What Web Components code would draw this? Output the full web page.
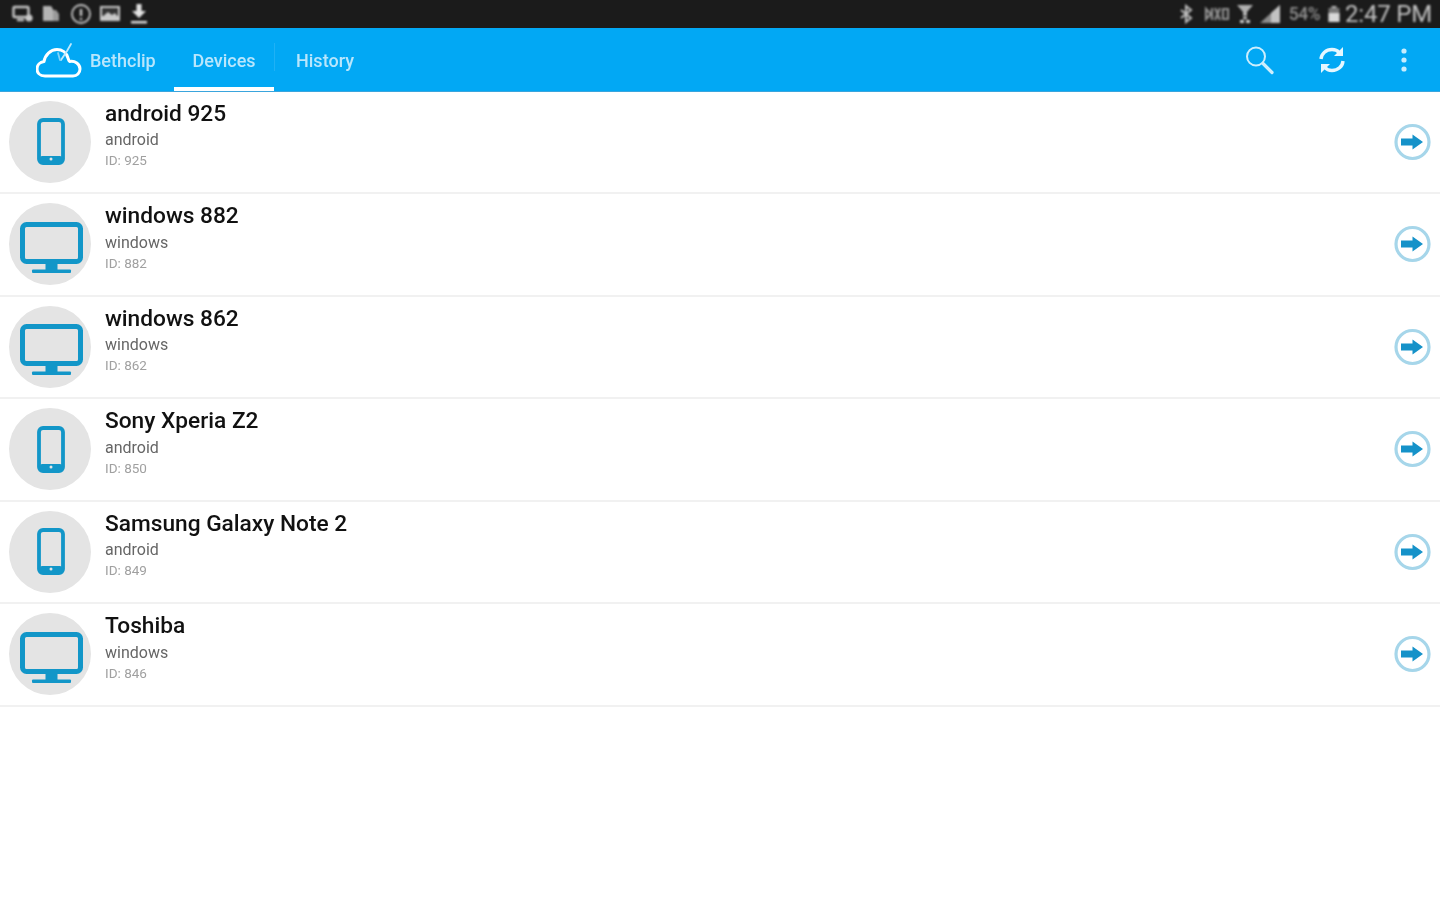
<!DOCTYPE html>
<html>
<head>
<meta charset="utf-8">
<title>Bethclip</title>
<style>
html, body { margin: 0; height: 100%; background: #fff; }
body { display: flex; flex-direction: column; height: 900px; overflow: hidden; font-family: "Roboto", "Liberation Sans", sans-serif; }
</style>
</head>
<body>
<status-bar></status-bar>
<app-bar></app-bar>
<device-list>
  <device-row name="android 925" kind="android" device-id="925"></device-row>
  <device-row name="windows 882" kind="windows" device-id="882"></device-row>
  <device-row name="windows 862" kind="windows" device-id="862"></device-row>
  <device-row name="Sony Xperia Z2" kind="android" device-id="850"></device-row>
  <device-row name="Samsung Galaxy Note 2" kind="android" device-id="849"></device-row>
  <device-row name="Toshiba" kind="windows" device-id="846"></device-row>
</device-list>

<script>
customElements.define('status-bar',
    class StatusBar extends HTMLElement {
        constructor() {
            super();
            const shadow = this.attachShadow({ mode: 'open' });
            shadow.innerHTML = `
            <style>
                :host {
                    display: block;
                    flex: 0 0 28px;
                    height: 28px;
                    background: #1b1b1b;
                    color: #c4c4c4;
                }
                .bar {
                    display: flex;
                    height: 100%;
                    align-items: center;
                    justify-content: space-between;
                    padding: 0 8px 0 12px;
                    box-sizing: border-box;
                    filter: blur(0.8px);
                }
                .left, .right { display: flex; align-items: center; }
                .left { gap: 8px; }
                svg { display: block; }
                .pct { font-size: 17.5px; font-weight: 500; letter-spacing: -0.5px; color: #8f8f8f; margin: 0 8px; }
                .time { font-size: 24px; color: #c2c2c2; margin-left: 5px; letter-spacing: -0.2px; }
            </style>
            <div class="bar">
            <div class="left">
                <svg width="23" height="20" viewBox="0 0 23 20" fill="none" stroke="#c8c8c8" stroke-width="2.4">
                    <rect x="1.5" y="3" width="15" height="10" rx="1"/>
                    <circle cx="17" cy="14" r="3.6" fill="#c8c8c8" stroke="none"/>
                    <path d="M5 16h7"/>
                </svg>
                <svg width="18" height="20" viewBox="0 0 18 20" style="margin-left:-1px">
                    <path d="M1 2h8l2 3v12H1z" fill="#b4b4b4"/>
                    <path d="M11 6h3l3 4v7h-6z" fill="#9a9a9a"/>
                </svg>
                <svg width="22" height="22" viewBox="0 0 22 22" fill="none" stroke="#c8c8c8" stroke-width="1.8" style="margin-left:2px">
                    <circle cx="11" cy="11" r="9"/>
                    <path d="M11 6v7M11 15v2" stroke-width="2.4"/>
                </svg>
                <svg width="22" height="20" viewBox="0 0 22 20" style="margin-left:-1px">
                    <rect x="1" y="2" width="20" height="15" fill="#c8c8c8"/>
                    <rect x="3" y="4" width="16" height="8" fill="#333"/>
                    <path d="M3 13l6-5 4 3 3-2 3 4z" fill="#c8c8c8"/>
                </svg>
                <svg width="18" height="22" viewBox="0 0 18 22" fill="#e4e4e4" style="margin-left:1px">
                    <path d="M6.5 1h5v7h4.500L9 15 2 8h4.500z"/>
                    <rect x="1" y="18" width="16" height="2.400"/>
                </svg>
            </div>
            <div class="right">
                <svg width="14" height="20" viewBox="0 0 14 20" fill="none" stroke="#bdbdbd" stroke-width="2">
                    <path d="M2 6l10 8-5 4V2l5 4-10 8"/>
                </svg>
                <svg width="26" height="18" viewBox="0 0 26 18" fill="none" stroke="#8f8f8f" stroke-width="2.200" style="margin-left:11px">
                    <path d="M2 4l5 5-5 5zM8 3v12M11 3l5 12M16 3l-5 12M19 4h5v10h-5z"/>
                </svg>
                <svg width="18" height="22" viewBox="0 0 18 22" style="margin-left:6px">
                    <path d="M1 2h16l-6 7v4H7V9z" fill="#b0b0b0"/>
                    <path d="M7 14h4v2H7zM4 17h4v3H4zM10 17h4v3h-4z" fill="#d0d0d0"/>
                </svg>
                <svg width="22" height="20" viewBox="0 0 22 20" style="margin-left:5px">
                    <path d="M1 19L21 1v18z" fill="#8c8c8c"/>
                    <path d="M12 19V9l9-8v18z" fill="#c2c2c2"/>
                </svg>
                <span class="pct">54%</span>
                <svg width="12" height="18" viewBox="0 0 12 18">
                    <rect x="3.500" y="1" width="5" height="2" fill="#b5b5b5"/>
                    <rect x="0.500" y="3" width="11" height="14" fill="#777"/>
                    <rect x="0.500" y="8" width="11" height="9" fill="#d8d8d8"/>
                </svg>
                <span class="time">2:47 PM</span>
            </div>
            </div>
            `;
        }
    }
);

customElements.define('app-tab',
    class AppTab extends HTMLElement {
        constructor() {
            super();
            const shadow = this.attachShadow({ mode: 'open' });
            shadow.innerHTML = `
            <style>
                :host {
                    display: flex;
                    align-items: center;
                    justify-content: center;
                    box-sizing: border-box;
                    height: 100%;
                    width: 100px;
                    border-bottom: 4px solid transparent;
                    padding-top: 5px;
                    font-size: 18px;
                    font-weight: 500;
                    color: #b9e6fc;
                }
                :host([active]) { border-bottom-color: #fff; }
            </style>
            <slot></slot>
            `;
        }
    }
);

customElements.define('app-bar',
    class AppBar extends HTMLElement {
        constructor() {
            super();
            const shadow = this.attachShadow({ mode: 'open' });
            shadow.innerHTML = `
            <style>
                :host {
                    display: block;
                    flex: 0 0 64px;
                    height: 64px;
                    box-sizing: border-box;
                    background: #02a8f4;
                    border-bottom: 1px solid #3aa5dd;
                }
                .bar { display: flex; height: 100%; align-items: stretch; filter: blur(0.7px); }
                .brand { display: flex; align-items: center; gap: 8px; width: 174px; box-sizing: border-box; padding-left: 36px; }
                .brand span { font-size: 18px; font-weight: 500; color: #b9e6fc; margin-top: 1px; }
                .tabs { display: flex; align-items: stretch; }
                .sep { width: 1px; margin: 15px 0 20px; background: #1fb1f5; }
                .actions { margin-left: auto; display: flex; align-items: center; gap: 44px; padding: 0 33px 0 0; }
                svg { display: block; }
            </style>
            <div class="bar">
            <div class="brand">
                <svg width="46" height="40" viewBox="0 0 46 40" fill="none" stroke="#fff" stroke-width="3" stroke-linejoin="round" stroke-linecap="round">
                    <path d="M9 36C3.500 36 1 32.500 1 29c0-4 3-7 7-7.500C9 15 14.500 9.500 21 9.500c5 0 9.500 3 11 8.500 1 3 1 3.500 1.500 3.500 5.500-1 10.500 2.500 10.500 7.500 0 4-3 7-7 7z"/>
                    <path d="M25 20l6-9 4-7" stroke="#bfe8fb" stroke-width="1.800"/>
                    <path d="M22 13l2 7" stroke="#7fd2f8" stroke-width="1.800"/>
                </svg>
                <span>Bethclip</span>
            </div>
            <div class="tabs">
                <app-tab active>Devices</app-tab>
                <div class="sep"></div>
                <app-tab>History</app-tab>
            </div>
            <div class="actions">
                <svg width="30" height="30" viewBox="0 0 30 30" fill="none" stroke="#cdeefd" stroke-linecap="round">
                    <circle cx="12" cy="11.500" r="9" stroke-width="2"/>
                    <path d="M19 18.500l9 9" stroke-width="3.200"/>
                </svg>
                <svg width="28" height="28" viewBox="0 0 28 28" fill="none" stroke="#e6f7ff" stroke-width="3.400">
                    <path d="M3 13C3.500 7.500 8 3.500 14 3.500c3 0 5.500 1 7 3"/>
                    <path d="M25 15c-.5 5.500-5 9.500-11 9.500-3 0-5.500-1-7-3"/>
                    <path d="M25 1v9h-9z" fill="#e6f7ff" stroke="none"/>
                    <path d="M3 27v-9h9z" fill="#e6f7ff" stroke="none"/>
                </svg>
                <svg width="6" height="24" viewBox="0 0 6 24" fill="#c6ecfd" style="margin-left:11px">
                    <circle cx="3" cy="3" r="2.600"/>
                    <circle cx="3" cy="12" r="2.600"/>
                    <circle cx="3" cy="21" r="2.600"/>
                </svg>
            </div>
            </div>
            `;
        }
    }
);

customElements.define('device-list',
    class DeviceList extends HTMLElement {
        constructor() {
            super();
            const shadow = this.attachShadow({ mode: 'open' });
            shadow.innerHTML = `
            <style>
                :host { display: block; flex: 1; margin-top: -0.5px; background: #fff; }
            </style>
            <slot></slot>
            `;
        }
    }
);

const phoneIcon = `
    <svg width="28" height="47" viewBox="0 0 28 47" fill="none" style="margin-left:2px">
        <rect x="2" y="2" width="24" height="43" rx="4" stroke="#1296c8" stroke-width="3.800"/>
        <rect x="3" y="38" width="22" height="7" rx="2" fill="#1296c8"/>
        <circle cx="14" cy="41" r="1.500" fill="#e4e4e4"/>
    </svg>`;

const monitorIcon = `
    <svg width="63" height="51" viewBox="0 0 63 51" fill="none" style="margin:6px 0 0 3px">
        <rect x="2.500" y="2.500" width="58" height="37" rx="4" stroke="#1296c8" stroke-width="5"/>
        <rect x="25.500" y="40" width="12" height="8" fill="#1296c8"/>
        <rect x="12" y="47.500" width="39" height="3.500" rx="1" fill="#1296c8"/>
    </svg>`;

customElements.define('device-row',
    class DeviceRow extends HTMLElement {
        connectedCallback() {
            const shadow = this.shadowRoot || this.attachShadow({ mode: 'open' });
            const kind = this.getAttribute('kind');
            shadow.innerHTML = `
            <style>
                :host {
                    display: flex;
                    align-items: center;
                    height: 102.5px;
                    box-sizing: border-box;
                    padding: 0 9px;
                    border-bottom: 2px solid #f1f1f1;
                    filter: blur(0.7px);
                }
                .avatar {
                    flex: none;
                    display: flex;
                    align-items: center;
                    justify-content: center;
                    width: 82px;
                    height: 82px;
                    border-radius: 50%;
                    background: #e4e4e4;
                }
                .text { flex: 1; margin-left: 14px; display: flex; flex-direction: column; margin-top: -16px; }
                .name { font-size: 22.7px; line-height: 30px; font-weight: 500; color: #111; }
                .kind { font-size: 16px; line-height: 20px; margin-top: 1.500px; color: #666; }
                .id { font-size: 13.5px; line-height: 18px; margin-top: 1px; color: #a0a0a0; }
                svg { display: block; }
            </style>
            <div class="avatar">${kind === 'windows' ? monitorIcon : phoneIcon}</div>
            <div class="text">
                <span class="name">${this.getAttribute('name')}</span>
                <span class="kind">${kind}</span>
                <span class="id">ID: ${this.getAttribute('device-id')}</span>
            </div>
            <svg width="38" height="38" viewBox="0 0 38 38" fill="none" style="margin-right:-1px">
                <circle cx="18.500" cy="19" r="16.500" stroke="#a6d6ea" stroke-width="3.200"/>
                <path d="M7 15.500h11.500v-4l10.500 7.500-10.500 7.500v-4H7z" fill="#1592c9"/>
            </svg>
            `;
        }
    }
);
</script>
</body>
</html>
